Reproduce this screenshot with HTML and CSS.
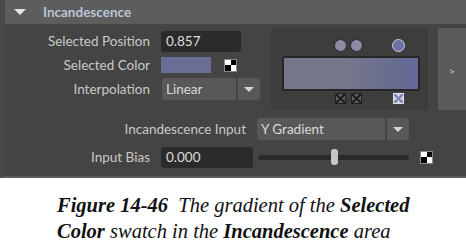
FILE: index.html
```html
<!DOCTYPE html>
<html>
<head>
<meta charset="utf-8">
<link rel="stylesheet" href="styles.css">
</head>
<body>
<div class="panel">
  <div class="header">
    <span class="tri"></span>
    <span class="title">Incandescence</span>
  </div>
  <div class="top">
    <div class="fields">
      <div class="row">
        <span class="label">Selected Position</span>
        <span class="field pos">0.857</span>
      </div>
      <div class="row">
        <span class="label">Selected Color</span>
        <span class="swatch"></span>
        <span class="checker"><i class="w"></i><i class="b"></i><i class="b"></i><i class="w"></i></span>
      </div>
      <div class="row">
        <span class="label">Interpolation</span>
        <span class="drop interp">Linear</span>
        <span class="dbtn"><span class="arrow"></span></span>
      </div>
    </div>
    <div class="gradpanel">
      <div class="ramp">
        <span class="knob" style="left:58px"></span>
        <span class="knob" style="left:74px"></span>
        <span class="knob sel" style="left:116px"></span>
        <div class="bar"></div>
        <span class="mark" style="left:58px"></span>
        <span class="mark" style="left:74px"></span>
        <span class="mark sel" style="left:116px"></span>
      </div>
    </div>
    <div class="side">&gt;</div>
  </div>
  <div class="row inrow">
    <span class="label wide">Incandescence Input</span>
    <span class="drop ygrad">Y Gradient</span>
    <span class="dbtn"><span class="arrow"></span></span>
  </div>
  <div class="row biasrow">
    <span class="label">Input Bias</span>
    <span class="field bias">0.000</span>
    <span class="slider"><span class="thumb"></span></span>
    <span class="checker"><i class="w"></i><i class="b"></i><i class="b"></i><i class="w"></i></span>
  </div>
</div>
<div class="caption">
  <p><b>Figure 14-46</b>&nbsp; The gradient of the <b>Selected</b><br><b>Color</b> swatch in the <b>Incandescence</b> area</p>
</div>
</body>
</html>
```
FILE: styles.css
```css
* { box-sizing: border-box; }
html, body { margin: 0; padding: 0; background: #fff; }
body { width: 466px; height: 243px; overflow: hidden; font-family: Lato, "Open Sans", sans-serif; }

.panel {
  height: 178px;
  background: #444444;
  border-left: 5px solid #494949;
  border-bottom: 2px solid #5e5e5e;
  display: flex;
  flex-direction: column;
}
.header {
  height: 24px;
  background: #5d5d5d;
  display: flex;
  align-items: center;
}
.tri {
  width: 0; height: 0;
  margin-left: 9px;
  border-left: 6px solid transparent;
  border-right: 6px solid transparent;
  border-top: 6px solid #e6e6e6;
}
.title {
  margin-left: 17px;
  color: #bac6d6;
  font-size: 13.5px;
  font-weight: bold;
}
.top {
  display: flex;
  margin-top: 4px;
  height: 82px;
}
.fields {
  width: 266px;
  padding-top: 1px;
}
.row {
  display: flex;
  align-items: center;
  height: 24px;
}
.label {
  width: 145px;
  text-align: right;
  color: #c9c9c9;
  font-size: 13.5px;
  margin-right: 11px;
  white-space: nowrap;
}
.label.wide { width: 241px; }
.field {
  height: 21px;
  background: #2b2b2b;
  border-radius: 3px;
  color: #dcdcdc;
  font-size: 13.5px;
  padding-left: 5px;
  line-height: 21px;
}
.pos { width: 80px; }
.bias { width: 92px; }
.swatch {
  width: 50px; height: 16px;
  background: #696e95;
}
.checker {
  width: 13px; height: 13px;
  border: 1px solid #8a8a8a;
  display: grid;
  grid-template-columns: 1fr 1fr;
  margin-left: 13px;
}
.checker i.w { background: #fff; }
.checker i.b { background: #000; }
.drop {
  height: 22px;
  background: #585858;
  border-radius: 3px 0 0 3px;
  color: #dadada;
  font-size: 13.5px;
  padding-left: 4px;
  line-height: 22px;
}
.interp { width: 74px; margin-left: 1px; }
.ygrad { width: 128px; }
.dbtn {
  width: 22px; height: 22px;
  margin-left: 2px;
  background: #585858;
  border-radius: 0 3px 3px 0;
  display: flex; align-items: center; justify-content: center;
}
.arrow {
  width: 0; height: 0;
  border-left: 5px solid transparent;
  border-right: 5px solid transparent;
  border-top: 5px solid #d4d4d4;
}
.gradpanel {
  width: 157px;
  background: #3d3d3d;
  padding: 7px 0 0 11px;
}
.ramp { position: relative; width: 140px; height: 75px; }
.bar {
  position: absolute; left: 0; top: 21px;
  width: 138px; height: 35px;
  border: 2px solid #262626;
  border-radius: 2px;
  background: linear-gradient(to right, #76768b 0%, #75768b 42%, #73758c 54%, #666b91 86%, #65699a 100%);
}
.knob {
  position: absolute; top: 4px;
  width: 13px; height: 13px;
  margin-left: -6px;
  border-radius: 50%;
  background: #8b8ba3;
  border: 1px solid #2a2a2a;
}
.knob.sel { background: #6a73a8; border: 1px solid #d0d0d0; }
.mark {
  position: absolute; top: 58px;
  width: 11px; height: 11px;
  margin-left: -5px;
  border: 1px solid #222;
  background:
    linear-gradient(45deg, transparent 44%, #1e1e1e 44%, #1e1e1e 56%, transparent 56%),
    linear-gradient(-45deg, transparent 44%, #1e1e1e 44%, #1e1e1e 56%, transparent 56%),
    #5a5a66;
}
.mark.sel {
  border-color: #e0e0e0;
  background:
    linear-gradient(45deg, transparent 44%, #7c84b4 44%, #7c84b4 56%, transparent 56%),
    linear-gradient(-45deg, transparent 44%, #7c84b4 44%, #7c84b4 56%, transparent 56%),
    #c8cce0;
}
.side {
  width: 28px;
  margin-left: 10px;
  background: #5b5b5b;
  color: #c8d0dc;
  font-size: 10px;
  padding-top: 4px;
  display: flex; align-items: center; justify-content: center;
}
.inrow { margin-top: 7px; height: 24px; }
.biasrow { margin-top: 4px; height: 24px; }
.slider {
  width: 151px; height: 5px;
  margin-left: 5px;
  background: #2a2a2a;
  border-radius: 3px;
  position: relative;
}
.thumb {
  position: absolute; left: 73px; top: -6px;
  width: 7px; height: 16px;
  border-radius: 3px;
  background: #c6c6c6;
}
.biasrow .checker { margin-left: 11px; }

.caption {
  padding-left: 57px;
  padding-top: 14px;
}
.caption p {
  margin: 0;
  font-family: "Liberation Serif", serif;
  font-style: italic;
  font-size: 20.5px;
  line-height: 26px;
  color: #111;
}
.caption b { font-weight: bold; }
```
